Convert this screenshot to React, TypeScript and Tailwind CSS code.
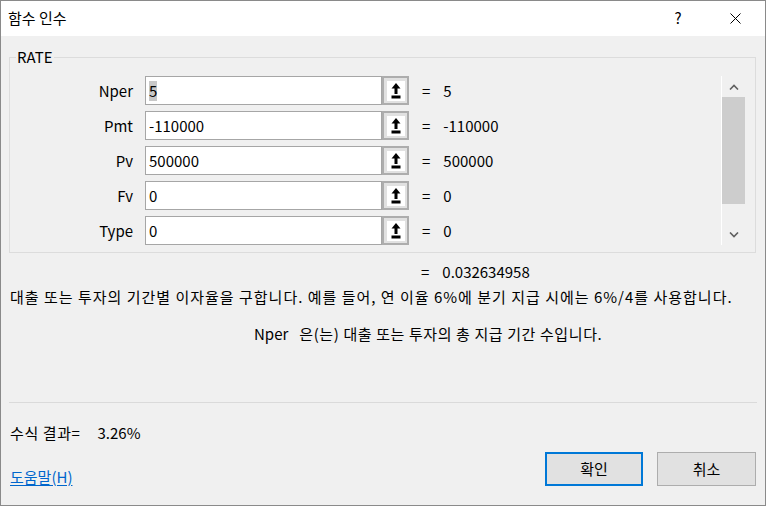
import React from 'react';

const FONT = "font-['Noto_Sans_CJK_KR','Noto_Sans',sans-serif]";

interface Arg {
  name: string;
  value: string;
  result: string;
  selected?: boolean;
}

const args: Arg[] = [
  { name: 'Nper', value: '5', result: '5', selected: true },
  { name: 'Pmt', value: '-110000', result: '-110000' },
  { name: 'Pv', value: '500000', result: '500000' },
  { name: 'Fv', value: '0', result: '0' },
  { name: 'Type', value: '0', result: '0' },
];

const RefIcon = () => (
  <svg width="10" height="16" viewBox="0 0 10 16" className="block">
    <polygon points="5,0 0.5,5.5 9.5,5.5" fill="#000" />
    <rect x="3.5" y="5" width="3" height="6" fill="#000" />
    <rect x="0.5" y="12.5" width="9" height="3" fill="#000" />
  </svg>
);

const ArgRow: React.FC<{ arg: Arg }> = ({ arg }) => (
  <div className="flex items-center h-[29px]">
    <div className="w-[123px] text-right text-[15px] leading-none">{arg.name}</div>
    <div className="ml-[12px] w-[237px] h-[29px] bg-white border border-[#a6a6a6] flex items-center pl-[3px] text-[15px]">
      <span className={arg.selected ? 'bg-[#c8c8c8] leading-[20px]' : 'leading-[20px]'}>{arg.value}</span>
    </div>
    <div className="w-[27px] h-[29px] border-2 border-[#adadad] bg-[#e1e1e1] flex items-center justify-center">
      <div className="w-[18px] h-[20px] bg-white flex items-center justify-center">
        <RefIcon />
      </div>
    </div>
    <div className="ml-[13px] text-[15px] leading-none">=</div>
    <div className="ml-[13px] text-[15px] leading-none">{arg.result}</div>
  </div>
);

const Chevron: React.FC<{ up?: boolean }> = ({ up }) => (
  <svg width="10" height="6" viewBox="0 0 10 6" className="block">
    <polyline
      points={up ? '1,5.5 5,1.5 9,5.5' : '1,0.5 5,4.5 9,0.5'}
      fill="none"
      stroke="#606060"
      strokeWidth="1.6"
    />
  </svg>
);

export default function App() {
  return (
    <div className={`${FONT} w-[766px] h-[506px] border border-[#8a8a8a] bg-[#f0f0f0] text-black flex flex-col`}>
      {/* title bar */}
      <div className="h-[35px] bg-white flex items-center pl-[7px] shrink-0">
        <div className="text-[15px]">함수 인수</div>
        <div className="ml-auto w-[14px] text-[15px] text-center mr-[45px]">?</div>
        <svg width="11" height="11" viewBox="0 0 11 11" className="mr-[24px]">
          <line x1="0.5" y1="0.5" x2="10.5" y2="10.5" stroke="#000" strokeWidth="1" />
          <line x1="10.5" y1="0.5" x2="0.5" y2="10.5" stroke="#000" strokeWidth="1" />
        </svg>
      </div>

      {/* argument group */}
      <fieldset className="mt-[11px] ml-[8px] w-[747px] border border-[#dcdcdc] pb-[7px]">
        <legend className="ml-[6px] px-[1px] text-[15px] leading-[20px]">RATE</legend>
        <div className="flex pt-[9px]">
          <div className="flex flex-col gap-[6px]">
            {args.map((a) => (
              <ArgRow key={a.name} arg={a} />
            ))}
          </div>
          <div className="ml-auto mr-[9px] w-[25px] h-[169px] border-l border-white flex flex-col">
            <div className="h-[21px] flex items-center justify-center">
              <Chevron up />
            </div>
            <div className="flex-1">
              <div className="w-[23px] h-[107px] bg-[#cdcdcd]" />
            </div>
            <div className="h-[21px] flex items-center justify-center">
              <Chevron />
            </div>
          </div>
        </div>
      </fieldset>

      {/* formula result */}
      <div className="flex items-center h-[20px] mt-[9px] text-[15px]">
        <div className="ml-[420px]">=</div>
        <div className="ml-[13px]">0.032634958</div>
      </div>
      <div className="mt-[5px] ml-[9px] text-[15px] leading-[20px] tracking-[1px] whitespace-nowrap">
        대출 또는 투자의 기간별 이자율을 구합니다. 예를 들어, 연 이율 6%에 분기 지급 시에는 6%/4를 사용합니다.
      </div>
      <div className="mt-[17px] flex text-[15px] leading-[20px] whitespace-nowrap">
        <div className="ml-[253px]">Nper</div>
        <div className="ml-[11px] tracking-[0.6px]">은(는) 대출 또는 투자의 총 지급 기간 수입니다.</div>
      </div>

      {/* separator */}
      <div className="mt-[58px] ml-[8px] w-[748px] h-px bg-[#dadada]" />

      <div className="mt-[20px] flex text-[15px] leading-[20px]">
        <div className="ml-[9px] tracking-[0.6px]">수식 결과=</div>
        <div className="ml-[17px]">3.26%</div>
      </div>

      {/* footer */}
      <div className="mt-[7px] flex items-center">
        <a className="ml-[9px] mt-[16px] text-[15px] text-[#0066cc] underline underline-offset-2">도움말(H)</a>
        <button className="ml-auto w-[98px] h-[34px] border-2 border-[#0078d7] bg-[#e1e1e1] text-[15px]">확인</button>
        <button className="ml-[14px] mr-[9px] w-[99px] h-[34px] border border-[#adadad] bg-[#e1e1e1] text-[15px]">취소</button>
      </div>
    </div>
  );
}
